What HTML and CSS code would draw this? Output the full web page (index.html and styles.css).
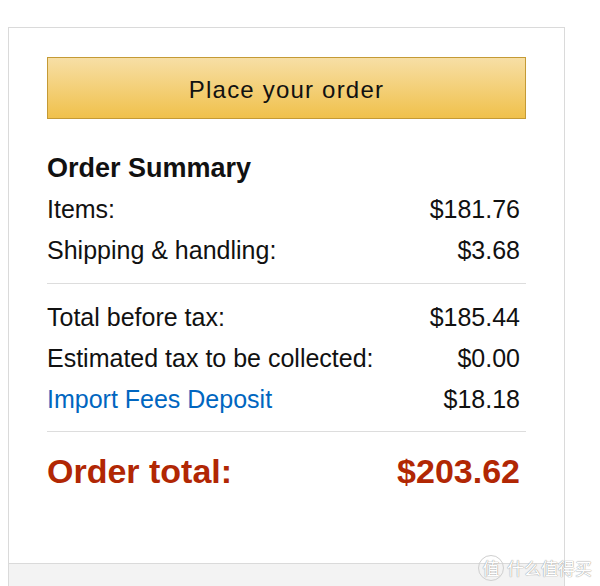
FILE: index.html
```html
<!DOCTYPE html>
<html lang="en">
<head>
  <meta charset="UTF-8" />
  <meta name="viewport" content="width=device-width, initial-scale=1.0"/>
  <title>Order Summary</title>
  <link rel="stylesheet" href="styles.css">
</head>
<body>

  <div class="checkout-col">
    <!-- Summary box -->
    <div class="summary-box">
      <button class="place-order">Place your order</button>

      <h2 class="summary-title">Order Summary</h2>
      <div class="row"><span>Items:</span><span>$181.76</span></div>
      <div class="row"><span>Shipping &amp; handling:</span><span>$3.68</span></div>

      <hr class="divider">

      <div class="row"><span>Total before tax:</span><span>$185.44</span></div>
      <div class="row"><span>Estimated tax to be collected:</span><span>$0.00</span></div>
      <div class="row"><a href="#" class="link">Import Fees Deposit</a><span>$18.18</span></div>

      <hr class="divider divider-last">

      <div class="row total"><span>Order total:</span><span>$203.62</span></div>
    </div>

    <!-- Grey area below -->
    <div class="col-footer"></div>
  </div>

  <div class="watermark"><span class="wm-circle">值</span><span class="wm-text">什么值得买</span></div>

</body>
</html>
```

FILE: styles.css
```css
/* Reset & base */
* { box-sizing: border-box; margin: 0; padding: 0; }
body {
  font-family: 'Liberation Sans', Arial, sans-serif;
  background: #fff;
  color: #111;
  height: 586px;
  overflow: hidden;
}

/* Right column */
.checkout-col {
  margin: 27px 0 0 8px;
  width: 557px;
  border-left: 1px solid #dadada;
  border-right: 1px solid #dadada;
  border-top: 1px solid #dadada;
}
.summary-box {
  padding: 29px 38px 70px 38px;
  border-bottom: 1px solid #dadada;
  background: #fff;
}
.col-footer {
  height: 40px;
  background: #f3f3f3;
}

/* Button */
.place-order {
  display: block;
  width: 100%;
  height: 62px;
  padding-top: 4px;
  border: 1px solid #c49a35;
  background: linear-gradient(to bottom, #f7dfa5, #f0c14b);
  font-family: inherit;
  font-size: 24px;
  letter-spacing: 1.2px;
  color: #111;
  cursor: pointer;
}

/* Summary lines */
.summary-title {
  margin-top: 33px;
  font-size: 27px;
  line-height: 32px;
  font-weight: bold;
  color: #111;
}
.summary-title + .row { margin-top: 5px; }
.row {
  display: flex;
  justify-content: space-between;
  padding-right: 6px;
  font-size: 25px;
  line-height: 41px;
  color: #111;
}
.link {
  color: #0066c0;
  text-decoration: none;
}
.divider {
  border: none;
  border-top: 1px solid #dddddd;
  margin: 12px 0 13px 0;
}
.divider-last { margin: 11px 0 17px 0; }
.row.total {
  font-size: 34px;
  line-height: 44px;
  font-weight: bold;
  color: #b12704;
}

/* Site watermark */
.watermark {
  position: absolute;
  left: 478px;
  top: 554px;
  height: 28px;
  display: flex;
  align-items: center;
  gap: 3px;
  white-space: nowrap;
  font-family: 'Noto Sans CJK SC', sans-serif;
  color: #fff;
  text-shadow: 0 0 1px #9a9a9a, 0 0 1px #9a9a9a;
}
.wm-circle {
  display: block;
  width: 26px;
  height: 26px;
  line-height: 24px;
  text-align: center;
  border: 1px solid #cfcfcf;
  border-radius: 50%;
  font-size: 17px;
}
.wm-text {
  font-size: 17px;
  line-height: 26px;
}
```
